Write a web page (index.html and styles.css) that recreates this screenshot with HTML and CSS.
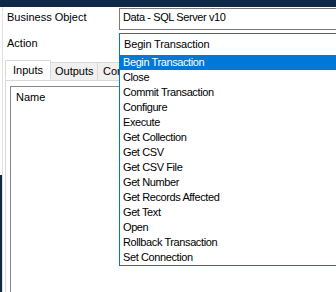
FILE: index.html
```html
<!DOCTYPE html>
<html lang="en">
<head>
    <meta charset="UTF-8">
    <meta name="viewport" content="width=device-width, initial-scale=1.0">
    <title>Action Properties</title>
    <link rel="stylesheet" href="styles.css">
</head>
<body>
    <div class="titlebar"></div>
    <div class="window">
        <div class="edge"></div>
        <div class="form">
            <div class="field first">
                <label class="field-label">Business Object</label>
                <div class="combo">Data - SQL Server v10</div>
            </div>
            <div class="field second">
                <label class="field-label">Action</label>
                <div class="combo open">
                    <span class="combo-text">Begin Transaction</span>
                    <ul class="droplist">
                        <li class="selected">Begin Transaction</li>
                        <li>Close</li>
                        <li>Commit Transaction</li>
                        <li>Configure</li>
                        <li>Execute</li>
                        <li>Get Collection</li>
                        <li>Get CSV</li>
                        <li>Get CSV File</li>
                        <li>Get Number</li>
                        <li>Get Records Affected</li>
                        <li>Get Text</li>
                        <li>Open</li>
                        <li>Rollback Transaction</li>
                        <li>Set Connection</li>
                    </ul>
                </div>
            </div>

            <!-- Pestañas de parámetros -->
            <div class="tabs">
                <div class="tabstrip">
                    <span class="tab active">Inputs</span>
                    <span class="tab">Outputs</span>
                    <span class="tab">Conditions</span>
                </div>
                <div class="tabpage">
                    <div class="grid">
                        <div class="grid-head">Name</div>
                    </div>
                </div>
            </div>
        </div>
    </div>
</body>
</html>
```

FILE: styles.css
```css
/* General */
html, body {
    margin: 0;
    height: 100%;
    overflow: hidden;
    background-color: #fff;
}

body {
    font-family: "Liberation Sans", Arial, sans-serif;
    font-size: 11px;
    color: #000;
}

/* Barra superior */
.titlebar {
    height: 7px;
    background-color: #0e2a48;
}

.window {
    display: flex;
    height: 285px;
    overflow: hidden;
}

/* Borde de la ventana de atrás */
.edge {
    width: 2px;
    border-right: 1px solid #e1e1e1;
    background: linear-gradient(#fff 0, #fff 168px, #0e2a48 168px);
}

.form {
    flex: 1;
    padding-top: 1px;
    min-width: 0;
}

/* Filas de formulario */
.field {
    display: grid;
    grid-template-columns: 116px 1fr;
}

.field.second {
    margin-top: 3px;
}

.field-label {
    padding-left: 4px;
    white-space: nowrap;
}

.first .field-label {
    padding-top: 1px;
    line-height: 17px;
}

.second .field-label {
    line-height: 20px;
}

/* Combos */
.combo {
    position: relative;
    box-sizing: border-box;
    height: 22px;
    padding-left: 3px;
    border: 1px solid #7a7a7a;
    border-right: none;
    line-height: 17px;
    letter-spacing: -0.4px;
    white-space: nowrap;
    background-color: #fff;
}

.combo.open {
    height: 21px;
    padding-left: 4px;
    border: none;
    border-top: 1px solid #0078d7;
    border-left: 1px solid #0078d7;
    line-height: 20px;
    letter-spacing: -0.15px;
    z-index: 2;
}

/* Lista desplegable */
.droplist {
    position: absolute;
    top: 100%;
    left: -1px;
    right: 0;
    margin: 0;
    padding: 1px 0 0;
    list-style: none;
    background-color: #fff;
    border-left: 1px solid #0078d7;
    border-bottom: 1px solid #0078d7;
    letter-spacing: -0.4px;
}

.droplist li {
    height: 15px;
    padding-left: 3px;
    line-height: 15px;
}

.droplist li.selected {
    background-color: #0078d7;
    color: #fff;
}

/* Pestañas */
.tabs {
    margin-top: 6px;
    margin-left: 2px;
}

.tabstrip {
    display: flex;
    align-items: flex-end;
    height: 20px;
    overflow: hidden;
}

.tab {
    box-sizing: border-box;
    height: 18px;
    margin-left: -1px;
    padding-left: 4px;
    border: 1px solid #d9d9d9;
    border-bottom: none;
    background-color: #f0f0f0;
    line-height: 17px;
    white-space: nowrap;
}

.tab:first-child {
    margin-left: 0;
}

.tab.active {
    position: relative;
    z-index: 1;
    width: 46px;
    height: 20px;
    padding-left: 7px;
    border-bottom: 1px solid #fff;
    background-color: #fff;
    line-height: 18px;
}

.tab:nth-child(2) {
    width: 48px;
}

.tab:nth-child(3) {
    padding-left: 5px;
}

.tabpage {
    height: 206px;
    padding: 5px 0 0 4px;
    border-top: 1px solid #d9d9d9;
    border-left: 1px solid #d9d9d9;
}

/* Cuadrícula de entradas */
.grid {
    height: 100%;
    border-top: 1px solid #828790;
    border-left: 1px solid #828790;
    background-color: #fff;
}

.grid-head {
    padding-left: 5px;
    line-height: 20px;
}
```
